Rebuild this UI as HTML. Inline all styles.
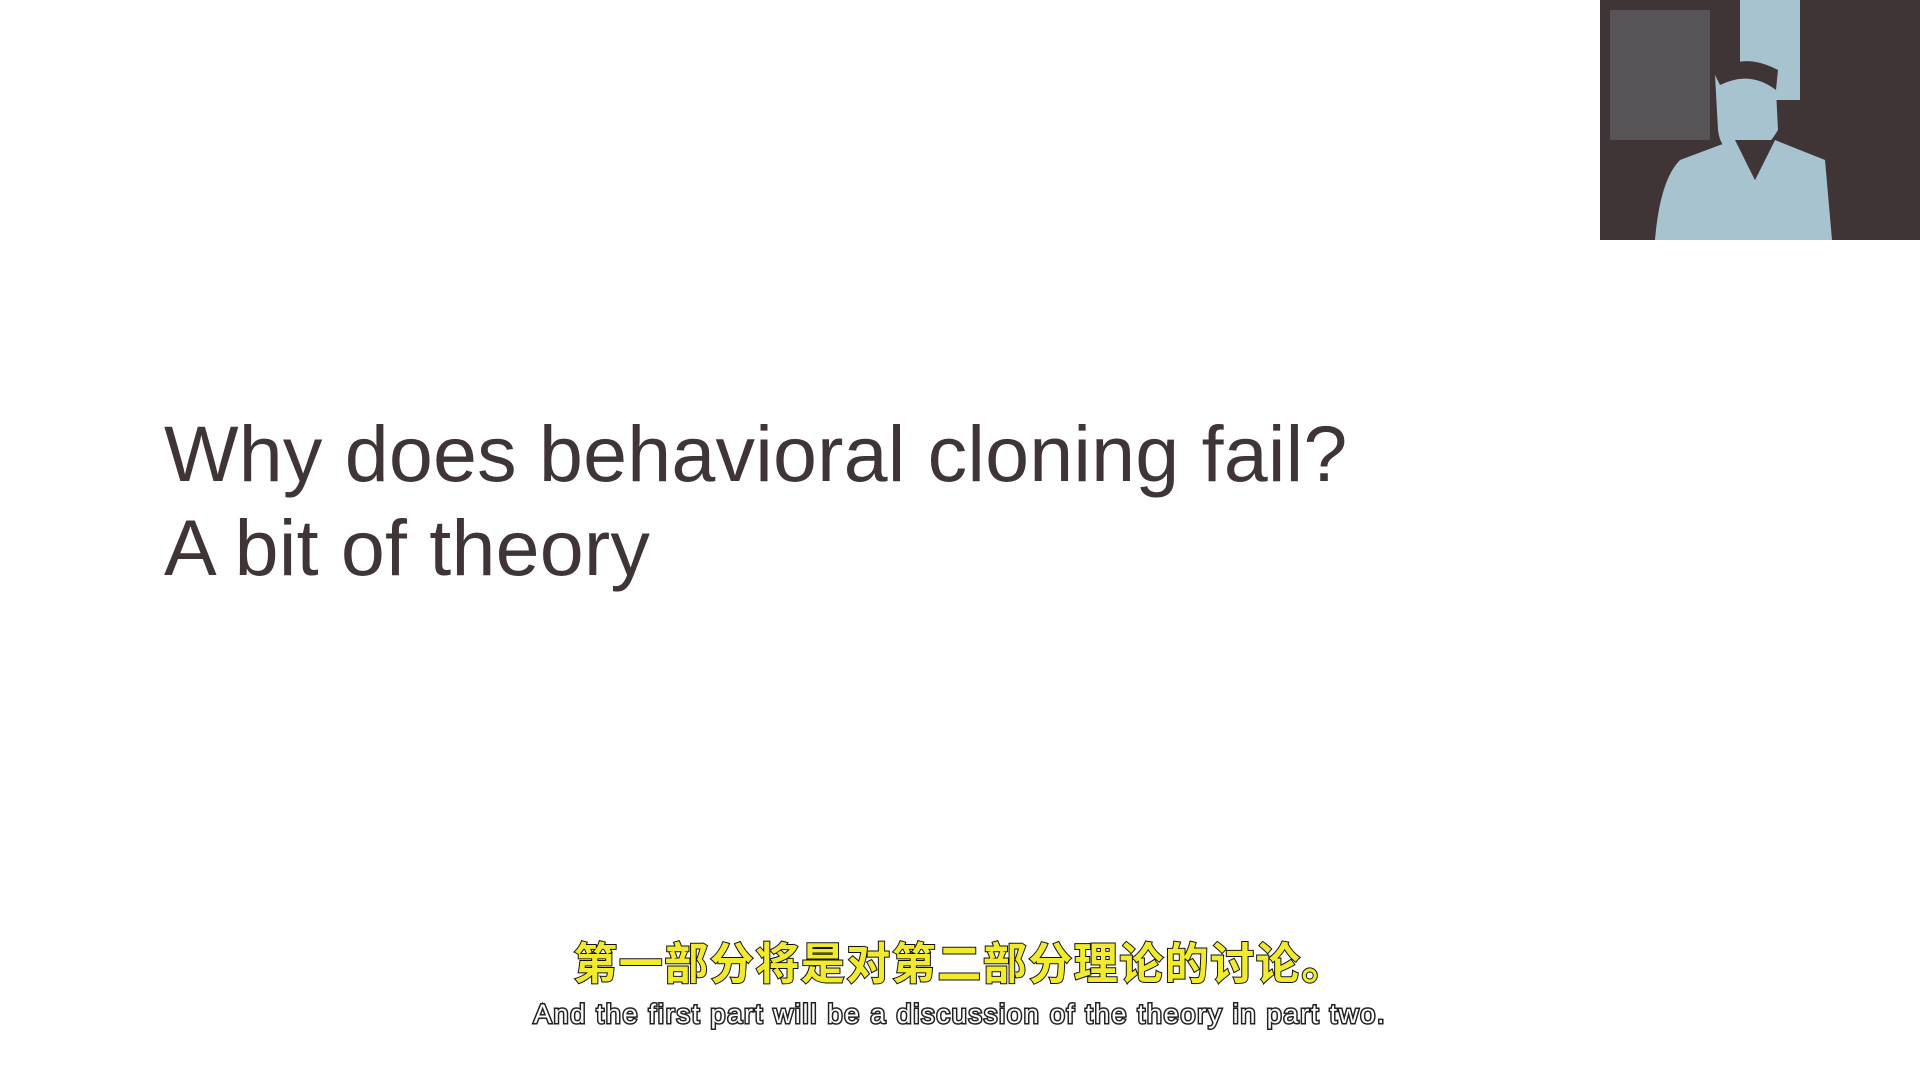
<!DOCTYPE html>
<html><head><meta charset="utf-8"><style>
html,body{margin:0;padding:0;width:1920px;height:1080px;background:#fff;overflow:hidden;position:relative}
.t{position:absolute;left:164px;font-family:"Liberation Sans",sans-serif;color:#3f3536;font-size:79px;white-space:nowrap;line-height:1;letter-spacing:0.2px}
.cam{position:absolute;left:1600px;top:0;width:320px;height:240px;background:#3f3536;overflow:hidden}
.zh{position:absolute;top:934px;left:0;width:1920px;text-align:center;font-family:"Noto Sans CJK SC",sans-serif;font-size:44px;letter-spacing:1.5px;font-weight:bold;color:#f2ea2c;-webkit-text-stroke:2px #111;paint-order:stroke fill;line-height:1.2}
.en{position:absolute;top:998px;left:0;width:1920px;text-align:center;font-family:"Liberation Sans",sans-serif;font-size:27px;color:#fff;-webkit-text-stroke:3px #222;paint-order:stroke fill;line-height:1.2;letter-spacing:1.8px}
</style></head><body>
<div class="t" style="top:414px">Why does behavioral cloning fail?</div>
<div class="t" style="top:508px">A bit of theory</div>
<div class="cam">
<svg width="320" height="240" viewBox="0 0 320 240">
<rect x="10" y="10" width="100" height="130" fill="#6f7377" opacity=".5"/>
<rect x="140" y="0" width="60" height="100" fill="#a8c3d0"/>
<path d="M115 75 Q140 55 175 70 L178 130 Q160 160 140 160 Q120 150 118 130 Z" fill="#a8c3d0"/>
<path d="M115 75 Q140 50 178 70 L176 90 Q150 70 120 85 Z" fill="#3f3536"/>
<path d="M135 140 L120 145 L80 160 Q60 180 55 240 L232 240 L225 160 L175 140 L155 180 Z" fill="#a8c3d0"/>
<path d="M135 140 L155 180 L175 140 Z" fill="#3f3536"/>
</svg>
</div>
<div class="zh">第一部分将是对第二部分理论的讨论。</div>
<div class="en">And the first part will be a discussion of the theory in part two.</div>
</body></html>
